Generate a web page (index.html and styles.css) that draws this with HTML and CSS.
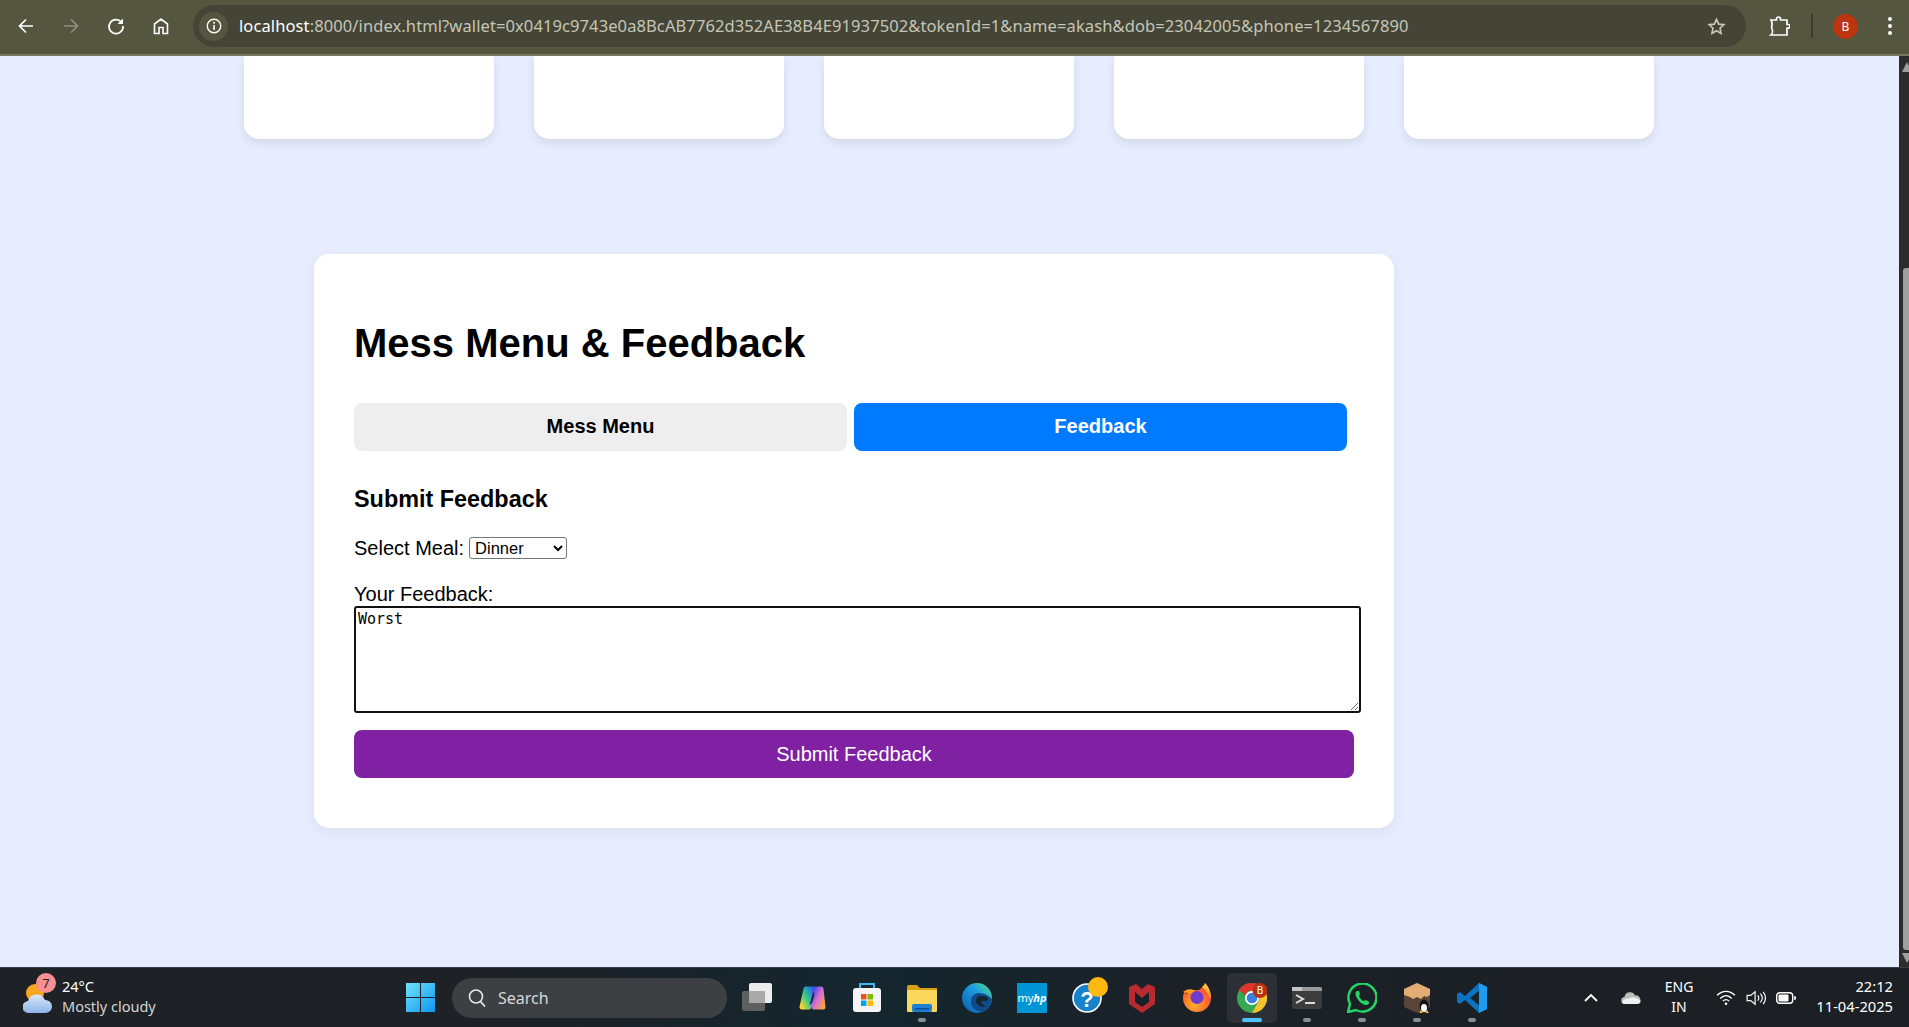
FILE: index.html
```html
<!DOCTYPE html>
<html lang="en">
<head>
<meta charset="utf-8">
<title>Mess Menu &amp; Feedback</title>
<link rel="stylesheet" href="styles.css">
</head>
<body>
<header class="browser">
  <svg class="nav-icon" viewBox="0 0 20 20"><path d="M17 10H4M10 3.500 3.500 10l6.500 6.500" fill="none" stroke="#fff" stroke-width="1.700"/></svg>
  <svg class="nav-icon dim" viewBox="0 0 20 20"><path d="M3 10h13M10 3.500l6.500 6.500-6.500 6.500" fill="none" stroke="#8e8f80" stroke-width="1.700"/></svg>
  <svg class="nav-icon" viewBox="0 0 20 20"><path d="M15.500 6.300A7 7 0 1 0 17 10" fill="none" stroke="#fff" stroke-width="1.700"/><path d="M17 2.500V8h-5.500z" fill="#fff"/></svg>
  <svg class="nav-icon" viewBox="0 0 20 20"><path d="M3.500 17.500V8L10 3l6.500 5v9.500h-4.500v-6H8v6z" fill="none" stroke="#fff" stroke-width="1.600"/></svg>
  <div class="omnibox">
    <span class="site-chip"><svg viewBox="0 0 20 20" class="info"><circle cx="10" cy="10" r="7.500" fill="none" stroke="#fff" stroke-width="1.500"/><path d="M10 9v5.500" stroke="#fff" stroke-width="1.700"/><circle cx="10" cy="6.400" r="1.100" fill="#fff"/></svg></span>
    <span class="url"><span class="host">localhost</span>:8000/index.html?wallet=0x0419c9743e0a8BcAB7762d352AE38B4E91937502&amp;tokenId=1&amp;name=akash&amp;dob=23042005&amp;phone=1234567890</span>
    <svg class="star" viewBox="0 0 20 20"><path d="M10 2.500l2.300 5 5.400.6-4 3.700 1.100 5.400L10 14.500l-4.800 2.700 1.100-5.400-4-3.700 5.400-.6z" fill="none" stroke="#c8c8bd" stroke-width="1.700"/></svg>
  </div>
  <svg class="ext" viewBox="0 0 21 20"><path d="M2 4h5.500V3a2 2 0 0 1 4 0v1H18v4.500h1.200a1.800 1.800 0 0 1 0 3.600H18V19H2c1.800-1.500 1.800-5 .6-7.500C3.200 9 3.500 6.500 2 4z" fill="none" stroke="#fff" stroke-width="1.700"/></svg>
  <span class="divider"></span>
  <span class="avatar">B</span>
  <span class="kebab"><i></i><i></i><i></i></span>
</header>

<div class="viewport">
  <main class="page">
    <section class="stat-row">
      <div class="stat-card"></div>
      <div class="stat-card"></div>
      <div class="stat-card"></div>
      <div class="stat-card"></div>
      <div class="stat-card"></div>
    </section>
    <section class="panel">
      <h1>Mess Menu &amp; Feedback</h1>
      <div class="tabs">
        <button class="tab">Mess Menu</button>
        <button class="tab active">Feedback</button>
      </div>
      <h3>Submit Feedback</h3>
      <div class="meal-row">
        <label for="meal">Select Meal:</label>
        <select id="meal"><option>Breakfast</option><option>Lunch</option><option selected>Dinner</option></select>
      </div>
      <label class="fb-label" for="fb">Your Feedback:</label>
      <textarea id="fb">Worst</textarea>
      <button class="submit">Submit Feedback</button>
    </section>
  </main>
  <aside class="scrollbar">
    <span class="arrow up"></span>
    <span class="thumb"></span>
    <span class="arrow down"></span>
  </aside>
</div>

<footer class="taskbar">
  <div class="weather">
    <svg class="weather-icon" viewBox="0 0 30 30">
      <defs><linearGradient id="wc" x1="0" y1="0" x2="0" y2="1"><stop offset="0" stop-color="#d9e6f8"/><stop offset="1" stop-color="#8fb5ea"/></linearGradient></defs>
      <circle cx="12" cy="10" r="9" fill="#f5a623"/>
      <path d="M6 30a6 6 0 0 1-1-12 9 9 0 0 1 17-1 6.500 6.500 0 0 1 1 13z" fill="url(#wc)"/>
    </svg>
    <span class="badge">7</span>
    <div class="weather-text"><span class="temp">24°C</span><span class="cond">Mostly cloudy</span></div>
  </div>
  <div class="center-icons">
    <svg class="tb win" viewBox="0 0 28 28"><defs><linearGradient id="w" x1="0" y1="0" x2="1" y2="1"><stop offset="0" stop-color="#6fe3fb"/><stop offset="1" stop-color="#0f95f0"/></linearGradient></defs><path d="M0 0h13.500v13.500H0zM14.500 0H28v13.500H14.500zM0 14.500h13.500V28H0zM14.500 14.500H28V28H14.500z" fill="url(#w)"/></svg>
    <div class="search"><svg viewBox="0 0 20 20" class="lens"><circle cx="9" cy="8.500" r="6.500" fill="none" stroke="#e8e8e8" stroke-width="1.600"/><path d="M13.500 13.500l4.500 5" stroke="#e8e8e8" stroke-width="1.800"/></svg><span>Search</span></div>
    <svg class="tb" viewBox="0 0 30 30"><rect x="0" y="8" width="23" height="20" rx="2" fill="#5f5f5f"/><rect x="7" y="0" width="23" height="20" rx="2" fill="#ececec"/><rect x="7" y="8" width="16" height="12" fill="#a9a9a9"/></svg>
    <svg class="tb" viewBox="0 0 30 30"><defs><linearGradient id="c1" x1="0" y1="1" x2="1" y2="0"><stop offset="0" stop-color="#f8d12e"/><stop offset=".45" stop-color="#37c98e"/><stop offset="1" stop-color="#1f6fe8"/></linearGradient><linearGradient id="c2" x1="0" y1="0" x2="1" y2="1"><stop offset="0" stop-color="#3f4fe0"/><stop offset=".45" stop-color="#d56bd8"/><stop offset="1" stop-color="#f6a04b"/></linearGradient></defs><path class="lobe" d="M9 6h7l-4 18H5z" fill="url(#c1)" stroke="url(#c1)"/><path class="lobe" d="M18 6h6l2 18h-9z" fill="url(#c2)" stroke="url(#c2)"/><path d="M16.500 9c-1.500 3-3 9-4 13 2.500-1 3-3 4-6.500s1-5 0-6.500z" fill="#1b2a55"/></svg>
    <svg class="tb" viewBox="0 0 30 30"><path d="M8 7V1h14v6" fill="none" stroke="#3eb7f0" stroke-width="2"/><rect x="1" y="5" width="28" height="24" rx="3" fill="#f4f4f4"/><rect x="9" y="11" width="5.500" height="5.500" fill="#f25022"/><rect x="15.500" y="11" width="5.500" height="5.500" fill="#7fba00"/><rect x="9" y="17.500" width="5.500" height="5.500" fill="#00a4ef"/><rect x="15.500" y="17.500" width="5.500" height="5.500" fill="#ffb900"/></svg>
    <span class="tb-slot"><svg class="tb" viewBox="0 0 30 30"><path d="M0 4a2 2 0 0 1 2-2h8l3 3h17v6H0z" fill="#d9a014"/><rect y="7" width="30" height="22" rx="1" fill="#fbd75b"/><rect x="5" y="21" width="20" height="8" rx="2" fill="#1a80d6"/><rect x="8" y="25" width="14" height="1.500" fill="#0c4f8f"/></svg><i class="pip"></i></span>
    <svg class="tb" viewBox="0 0 30 30"><defs><linearGradient id="e1" x1="0" y1="1" x2="1" y2="0"><stop offset="0" stop-color="#0c59a4"/><stop offset=".6" stop-color="#1b9de2"/><stop offset="1" stop-color="#5fe07a"/></linearGradient></defs><circle cx="15" cy="15" r="15" fill="url(#e1)"/><path d="M9 20c-1-6 3-10 8-10 5 0 9 2 13 6-1 6-4 10-8 12-6 2-12-2-13-8z" fill="#114a8b"/><path d="M14 18c0-3 2-5 5-5 4 0 7 1 7 3s-4 2-6 2c-1 0-1 1 0 3 1 1 2 2 4 2-2 1-4 1-6 0-2-1-4-3-4-5z" fill="#15262e"/></svg>
    <span class="myhp">my<em>hp</em></span>
    <span class="tb-slot"><svg class="tb" viewBox="0 0 30 30"><circle cx="15" cy="15" r="14" fill="#1582cc" stroke="#fff" stroke-width="1.600"/><text x="15" y="24" class="q" text-anchor="middle">?</text></svg><i class="dot"></i></span>
    <svg class="tb" viewBox="0 0 30 30"><path d="M2 4l7-3 6 5 6-5 7 3v17l-13 9-13-9z" fill="#b72b2e"/><path d="M8 9l7 6 7-6v10l-7 5-7-5z" fill="#17212a"/></svg>
    <svg class="tb" viewBox="0 0 30 30"><defs><radialGradient id="f1" cx=".4" cy=".75" r=".85"><stop offset="0" stop-color="#ffb02e"/><stop offset=".6" stop-color="#f9642e"/><stop offset="1" stop-color="#ee2d6b"/></radialGradient><linearGradient id="f2" x1="0" y1="0" x2="0" y2="1"><stop offset="0" stop-color="#ffd23e"/><stop offset="1" stop-color="#ff8a1f"/></linearGradient></defs><path d="M23 0c5 5 6 11 6 15a14 14 0 0 1-28 0c0-2 .5-5 2-7 0 2 1 3 2 3 2-3 9-4 12-4 2-2 5-4 6-7z" fill="url(#f1)"/><path d="M23 0c5 5 6 11 6 15-1 2-3-5-6-8-2-2-3-3-3-3 1-1 3-2 3-4z" fill="url(#f2)"/><circle cx="15" cy="14.500" r="6.500" fill="#6e3bd0"/><path d="M1 9c3-3 8-4 13-1-2 0-4 1-6 3z" fill="#ff9a1f"/></svg>
    <span class="tb-slot active-slot"><svg class="tb" viewBox="0 0 30 30"><circle cx="15" cy="15" r="15" fill="#34a853"/><path d="M15 0a15 15 0 0 1 13 7.500H15a7.500 7.500 0 0 0-7 5L2 7a15 15 0 0 1 13-7z" fill="#e0352b"/><path d="M28 7.500A15 15 0 0 1 15 30l6.500-11.300A7.500 7.500 0 0 0 15 7.500z" fill="#fbc02d"/><circle cx="15" cy="15" r="7" fill="#fff"/><circle cx="15" cy="15" r="5.300" fill="#3a7fe0"/><circle cx="23" cy="7.500" r="7.500" fill="#b8300f"/><text x="23" y="11" class="mini-b" text-anchor="middle">B</text></svg><i class="pip blue"></i></span>
    <span class="tb-slot"><svg class="tb" viewBox="0 0 30 30"><rect y="4" width="30" height="22" rx="2" fill="#3c3c3c"/><path d="M0 6a2 2 0 0 1 2-2h26a2 2 0 0 1 2 2v2H0z" fill="#9a9a9a"/><rect x="0" y="4" width="10" height="4" fill="#c4c4c4"/><path d="M4 12l7 4-7 4" fill="none" stroke="#ddd" stroke-width="2"/><rect x="13" y="19" width="10" height="2" fill="#ddd"/></svg><i class="pip"></i></span>
    <span class="tb-slot"><svg class="tb" viewBox="0 0 30 30"><path d="M1 29l2-8A14 14 0 1 1 9 27z" fill="none" stroke="#25d366" stroke-width="2.500"/><path d="M10 8c-2 1-2 4 0 7 2 4 6 7 9 7 2 0 4-2 3-3l-3-2-2 1c-2 0-4-3-5-5l1-2-1-3z" fill="#25d366"/></svg><i class="pip"></i></span>
    <span class="tb-slot"><svg class="tb" viewBox="0 0 30 30"><path d="M15 0l13 6v18l-13 6-13-6V6z" fill="#5a4438"/><path d="M15 0l13 6v6l-3 2-3-1-3 3-4-2-4 2-3-2-6-2V6z" fill="#e4ad74"/><ellipse cx="22" cy="23" rx="4.500" ry="6.500" fill="#111"/><ellipse cx="22" cy="25" rx="3" ry="4" fill="#fff"/><path d="M17 30h4l-2-3zM23 30h4l-2-3z" fill="#f5b82e"/></svg><i class="pip"></i></span>
    <span class="tb-slot"><svg class="tb" viewBox="0 0 30 30"><path d="M22 0l8 4v22l-8 4L8 17l-5 4-3-2v-8l3-2 5 4z" fill="#0b73c0"/><path d="M22 8v14l-9-7z" fill="#15262e"/><path d="M22 0l8 4v22l-8 4z" fill="#1f9cf0"/></svg><i class="pip"></i></span>
  </div>
  <div class="tray">
    <svg class="chev" viewBox="0 0 14 9"><path d="M1 8l6-6 6 6" fill="none" stroke="#fff" stroke-width="1.800"/></svg>
    <svg class="cloud" viewBox="0 0 20 13"><path d="M4 13a3.500 3.500 0 0 1-.5-7A5.500 5.500 0 0 1 14 4.500 4.200 4.200 0 0 1 16 13z" fill="#bdbdbd"/><path d="M1 11c2-3 5-4 7-3.500C10 6 14 5 19.500 9.500 20 12 18 13 16 13H4c-1.500 0-2.500-.8-3-2z" fill="#f0f0f0"/></svg>
    <div class="lang"><span>ENG</span><span>IN</span></div>
    <svg class="wifi" viewBox="0 0 22 18"><path d="M1 6c6-6 14-6 20 0M4.500 9.500c4-4 9-4 13 0M7.500 12.500c2-2 5-2 7 0" fill="none" stroke="#fff" stroke-width="1.500"/><circle cx="11" cy="15.500" r="1.500" fill="#fff"/></svg>
    <svg class="vol" viewBox="0 0 22 18"><path d="M1 6h4l5-4v14l-5-4H1z" fill="none" stroke="#fff" stroke-width="1.300"/><path d="M13 6c1.500 2 1.500 4 0 6M16 4c2.500 3 2.500 7 0 10M19 2c3.500 4 3.500 10 0 14" fill="none" stroke="#fff" stroke-width="1.300"/></svg>
    <svg class="batt" viewBox="0 0 20 12"><rect x=".7" y=".7" width="16" height="10.600" rx="3" fill="none" stroke="#fff" stroke-width="1.400"/><rect x="2.500" y="2.500" width="10" height="7" rx="1" fill="#fff"/><path d="M18.200 4v4a2 2 0 0 0 0-4z" fill="#fff"/></svg>
    <div class="clock"><span>22:12</span><span>11-04-2025</span></div>
  </div>
</footer>
</body>
</html>
```

FILE: styles.css
```css
* { box-sizing: border-box; }
html, body { margin: 0; height: 100%; }
body {
  width: 1909px;
  height: 1027px;
  overflow: hidden;
  display: flex;
  flex-direction: column;
  font-family: "Liberation Sans", Arial, sans-serif;
  background: #e7ecfe;
}

/* browser chrome */
.browser {
  flex: 0 0 56px;
  display: flex;
  align-items: center;
  background: #55563f;
  border-bottom: 2px solid #75765f;
  padding: 0 0 2px 16px;
}
.nav-icon { width: 20px; height: 20px; margin-right: 25px; flex: none; }
.omnibox {
  width: 1553px;
  height: 42px;
  margin-left: -3px;
  background: #444536;
  border-radius: 21px;
  display: flex;
  align-items: center;
  padding: 0 20px 0 6px;
  flex: none;
}
.site-chip {
  width: 29px; height: 29px; border-radius: 50%;
  background: #55563f;
  display: flex; align-items: center; justify-content: center;
  flex: none;
}
.info { width: 18px; height: 18px; }
.url {
  flex: 1;
  margin: 0 0 1px 11px;
  font-family: "Noto Sans", sans-serif;
  font-size: 16.5px;
  line-height: 22px;
  letter-spacing: 0.1px;
  color: #c4c5b8;
  white-space: nowrap;
}
.host { color: #fff; }
.star { width: 19px; height: 19px; flex: none; }
.ext { width: 21px; height: 20px; margin-left: 23px; flex: none; }
.divider { width: 2px; height: 24px; background: #3b3c2b; margin-left: 21px; flex: none; }
.avatar {
  width: 25px; height: 25px; border-radius: 50%;
  background: #bb3510; color: #fff;
  font-family: "Noto Sans", sans-serif; font-size: 12px;
  display: flex; align-items: center; justify-content: center;
  margin-left: 20px; flex: none;
}
.kebab { display: flex; flex-direction: column; gap: 3px; margin-left: 30px; flex: none; }
.kebab i { width: 4px; height: 4px; border-radius: 50%; background: #fff; display: block; }

/* viewport */
.viewport { flex: 1; display: flex; min-height: 0; overflow: hidden; }
.page { flex: 1; min-width: 0; }
.scrollbar {
  flex: 0 0 10px;
  background: #2c2c2c;
  display: flex;
  flex-direction: column;
  align-items: flex-start;
  overflow: hidden;
}
.arrow { width: 0; height: 0; border-left: 5px solid transparent; border-right: 5px solid transparent; flex: none; margin-left: 3px; }
.arrow.up { border-bottom: 10px solid #9f9f9f; margin-top: 6px; }
.arrow.down { border-top: 10px solid #9f9f9f; margin-bottom: 4px; }
.thumb { width: 8px; background: #9f9f9f; flex: none; height: 682px; margin: 196px 0 auto 4px; border-radius: 3px; }

.stat-row { display: flex; gap: 40px; padding-left: 244px; }
.stat-card {
  width: 250px;
  height: 83px;
  background: #fff;
  border-radius: 0 0 15px 15px;
  box-shadow: 0 4px 10px rgba(0, 0, 0, .09);
}
.panel {
  width: 1080px;
  height: 574px;
  margin: 115px 0 0 314px;
  padding: 40px;
  background: #fff;
  border-radius: 15px;
  box-shadow: 0 4px 15px rgba(0, 0, 0, .06);
}
h1 { margin: 26px 0 0; font-size: 40px; line-height: 46px; font-weight: 700; color: #000; }
.tabs { display: grid; grid-template-columns: 493px 493px; gap: 7px; margin-top: 37px; }
.tab {
  height: 48px;
  padding: 0 0 2px;
  border: 0;
  border-radius: 8px;
  background: #eee;
  color: #000;
  font: 700 20px "Liberation Sans", Arial, sans-serif;
}
.tab.active { background: #007bff; color: #fff; }
h3 { margin: 34px 0 0; font-size: 23.4px; line-height: 28px; font-weight: 700; color: #000; }
.meal-row { margin-top: 24px; font-size: 20px; line-height: 22px; display: flex; align-items: center; gap: 5px; }
select {
  width: 98px; height: 22px;
  padding: 0 0 0 1px;
  font: 16.5px "Liberation Sans", Arial, sans-serif;
  background: #fff;
  color: #000;
  border: 1px solid #767676;
  border-radius: 3px;
}
.fb-label { display: block; margin-top: 24px; font-size: 20px; line-height: 23px; }
textarea {
  display: block;
  width: 1007px;
  height: 107px;
  margin: 0;
  border: 2px solid #111;
  border-radius: 3px;
  padding: 2px;
  font: 15px "DejaVu Sans Mono", monospace;
  color: #000;
}
.submit {
  display: block;
  width: 1000px;
  height: 48px;
  margin-top: 17px;
  border: 0;
  border-radius: 8px;
  background: #8020a3;
  color: #fff;
  font: 20px "Liberation Sans", Arial, sans-serif;
}

/* taskbar */
.taskbar {
  flex: 0 0 60px;
  position: relative;
  display: flex;
  align-items: center;
  background: linear-gradient(90deg, #1e2126 0%, #1e2126 25%, #14262e 45%, #1b2127 62%, #1c1f24 100%);
  border-top: 1px solid #3a3d44;
  color: #fff;
  font-family: "Noto Sans", sans-serif;
}
.weather { position: relative; display: flex; width: 406px; padding-left: 23px; flex: none; align-items: center; }
.weather-icon { width: 30px; height: 30px; flex: none; }
.badge {
  position: absolute; left: 36px; top: -3px;
  width: 20px; height: 20px; border-radius: 50%;
  background: #f78f93; color: #222;
  font-size: 13px; line-height: 20px; text-align: center;
}
.weather-text { display: flex; flex-direction: column; margin: 0 0 4px 9px; font-size: 14.5px; line-height: 20px; }
.cond { color: #d5d5d5; }
.center-icons { display: flex; align-items: center; gap: 25px; flex: none; }
.tb { width: 30px; height: 30px; display: block; flex: none; }
.win { width: 29px; height: 29px; }
.lobe { stroke-width: 5; stroke-linejoin: round; }
.search {
  width: 275px; height: 40px; margin-left: -8px; margin-right: -10px;
  border-radius: 20px;
  background: #3d4043;
  display: flex; align-items: center; padding-left: 15px;
  font-size: 16px; color: #d8d8d8;
}
.lens { width: 20px; height: 20px; margin-right: 11px; }
.tb-slot { position: relative; display: block; width: 30px; height: 30px; flex: none; }
.pip { position: absolute; left: 11px; bottom: -9px; width: 8px; height: 4px; border-radius: 2px; background: #8b8f93; }
.pip.blue { left: 5px; width: 20px; background: #4cc2ff; }
.active-slot::before {
  content: ""; position: absolute; left: -10px; top: -10px; width: 50px; height: 50px;
  background: #2c2f35; border-radius: 5px;
}
.active-slot .tb { position: relative; }
.dot { position: absolute; right: -6px; top: -6px; width: 20px; height: 20px; border-radius: 50%; background: #ffb90f; }
.myhp {
  width: 30px; height: 30px; background: #0096d6; color: #fff;
  font-size: 11px; line-height: 30px; text-align: center; flex: none;
}
.myhp em { font-weight: 700; }
.q { font: 700 22px "Liberation Sans", sans-serif; fill: #fff; }
.mini-b { font: 10px "Noto Sans", sans-serif; fill: #fff; }
.tray { position: absolute; right: 0; top: 0; bottom: 0; display: flex; align-items: center; }
.chev { width: 14px; height: 9px; margin-right: 23px; }
.cloud { width: 20px; height: 13px; margin-right: 24px; }
.lang { display: flex; flex-direction: column; align-items: center; font-size: 14px; line-height: 20px; margin: 0 23px 1px 0; }
.wifi { width: 20px; height: 16px; margin-right: 10px; }
.vol { width: 20px; height: 16px; margin-right: 10px; }
.batt { width: 20px; height: 12px; margin-right: 20px; }
.clock { display: flex; flex-direction: column; align-items: flex-end; font-size: 14.7px; line-height: 20px; margin: 0 16px 3px 0; }
```
